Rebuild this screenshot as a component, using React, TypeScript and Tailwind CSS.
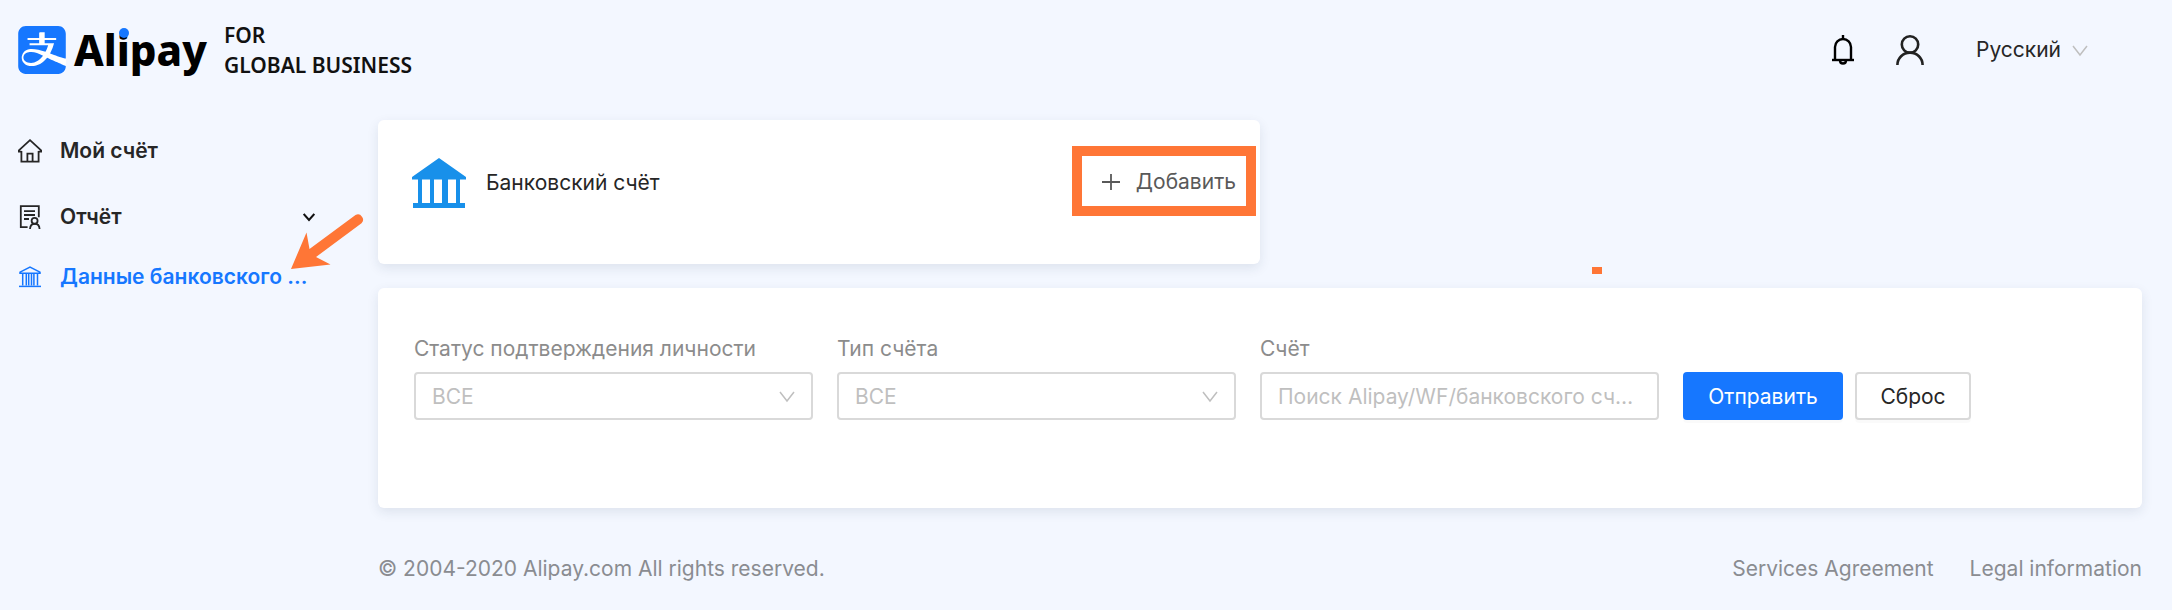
import React from "react";
import { SiAlipay } from "react-icons/si";

type IconProps = { className?: string };

function BellIcon({ className }: IconProps) {
  return (
    <svg viewBox="0 0 24 30" className={className} fill="none" stroke="#000" strokeWidth="2.400" aria-hidden="true">
      <path d="M4 25V12a8 8 0 0 1 16 0v13" />
      <path d="M1 25h22" />
      <path d="M12 0v4" />
      <path d="M9 25.5c0 4 6 4 6 0" />
    </svg>
  );
}

function UserIcon({ className }: IconProps) {
  return (
    <svg viewBox="0 0 28 30" className={className} fill="none" stroke="#222" strokeWidth="2.600" aria-hidden="true">
      <ellipse cx="14" cy="9.5" rx="8.2" ry="8.2" />
      <path d="M1.4 30a12.6 12.4 0 0 1 25.2 0" />
    </svg>
  );
}

function HomeIcon({ className }: IconProps) {
  return (
    <svg viewBox="0 0 24 24" className={className} fill="none" stroke="currentColor" strokeWidth="1.800" aria-hidden="true">
      <path d="M3.400 12.600H.900V11.400L12 1.200l11.100 10.200v1.200H20.600" />
      <path d="M3.400 12v10.600h17.200V12" />
      <path d="M9.400 22v-7.400h5.200V22" />
    </svg>
  );
}

function ReportIcon({ className }: IconProps) {
  return (
    <svg viewBox="0 0 24 24" className={className} fill="none" stroke="currentColor" strokeWidth="1.800" aria-hidden="true">
      <path d="M9.600 22.200H2.800V1.200h18v11" />
      <path d="M6 6.200h11M6 10h11M6 14h5" />
      <circle cx="16.600" cy="15.800" r="3" />
      <path d="M12 24c.4-7 9.200-7 9.600 0" />
    </svg>
  );
}

function BankOutlineIcon({ className }: IconProps) {
  return (
    <svg viewBox="0 0 24 24" className={className} fill="none" stroke="currentColor" strokeWidth="1.500" aria-hidden="true">
      <path d="M2 8.200v-1L12 2l10 5.200v1z" />
      <path d="M4.700 8.400v12M8.300 8.400v12M10.700 8.400v12M13.500 8.400v12M15.900 8.400v12M19.500 8.400v12" />
      <path d="M1 21.400h22" />
    </svg>
  );
}

function BankSolidIcon({ className }: IconProps) {
  return (
    <svg viewBox="0 0 54 50" className={className} fill="#1890ea" aria-hidden="true">
      <path d="M27 0 L54 19 V21.500 H48 V45 H53 V50 H1 V45 H6 V21.500 H0 V19 Z M10 21.500 V45 H18 V21.500 Z M22 21.500 V45 H30 V21.500 Z M36 21.500 V45 H44 V21.500 Z" fillRule="evenodd" />
    </svg>
  );
}

function Chevron({ className }: IconProps) {
  return (
    <svg viewBox="0 0 16 12" className={className} fill="none" stroke="#bfbfbf" strokeWidth="1.500" aria-hidden="true">
      <path d="M1 1l7 9 7-9" />
    </svg>
  );
}

function Logo() {
  return (
    <a href="#" className="flex items-center">
      <span className="mr-2 rounded-xl bg-white">
        <SiAlipay className="size-12 text-[#1677ff]" aria-hidden="true" />
      </span>
      <span className="relative w-[134px] font-['Noto_Sans'] text-[42px] leading-[52px] font-extrabold text-black">
        Alipay
        <span className="absolute top-1 left-[45px] size-[10px] rounded-full bg-[#1677ff]" />
      </span>
      <span className="ml-4 font-['Noto_Sans'] text-[21px] leading-[30px] font-semibold text-[#111]">
        FOR
        <br />
        GLOBAL BUSINESS
      </span>
    </a>
  );
}

function SelectField({ id, label }: { id: string; label: string }) {
  return (
    <div className="pr-6">
      <label htmlFor={id} className="block pb-[7px] text-[#8c8c8c]">
        {label}
      </label>
      <div className="relative">
        <select id={id} className="h-12 w-full appearance-none rounded border-2 border-[#d9d9d9] bg-white px-4 pt-[2px] text-[#bfbfbf]">
          <option>ВСЕ</option>
        </select>
        <Chevron className="pointer-events-none absolute top-[19px] right-[18px] h-3 w-4" />
      </div>
    </div>
  );
}

export default function App() {
  return (
    <div className="relative min-h-screen bg-[#f3f7ff] font-['Inter',sans-serif] text-[21px] leading-8 text-[#262626]">
      <header className="flex h-[100px] items-center justify-between pr-[84px] pl-[18px]">
        <Logo />
        <div className="flex items-center">
          <button type="button" aria-label="Уведомления" className="mr-[41px]">
            <BellIcon className="h-[30px] w-6" />
          </button>
          <button type="button" aria-label="Профиль" className="mr-[52px]">
            <UserIcon className="h-[30px] w-7" />
          </button>
          <div className="relative">
            <select aria-label="Язык" className="w-28 appearance-none bg-transparent">
              <option>Русский</option>
            </select>
            <Chevron className="pointer-events-none absolute top-[11px] right-0 h-3 w-4" />
          </div>
        </div>
      </header>

      <div className="flex pt-5">
        <nav className="relative w-[378px] shrink-0 pt-[11px] pl-[18px] font-semibold">
          <a href="#" className="flex h-10 items-center gap-[18px]">
            <HomeIcon className="size-6 shrink-0" />
            Мой счёт
          </a>
          <a href="#" className="mt-[26px] flex h-10 items-center gap-[18px]">
            <ReportIcon className="size-6 shrink-0" />
            Отчёт
            <svg viewBox="0 0 12 9" className="mr-[63px] ml-auto h-[9px] w-3" fill="none" stroke="#111" strokeWidth="2" aria-hidden="true">
              <path d="M.700 1l5.300 6 5.300-6" />
            </svg>
          </a>
          <a href="#" className="mt-5 flex h-10 items-center gap-[18px] text-[#1677ff]">
            <BankOutlineIcon className="size-6 shrink-0" />
            <span className="whitespace-nowrap">Данные банковского ...</span>
          </a>
          <svg viewBox="0 0 76 60" className="absolute top-[92px] left-[290px] h-[60px] w-[76px]" fill="#ff7636" aria-hidden="true">
            <path d="M1 57L16.500 20.500L19.500 37L65.500 3A5.200 5.200 0 0 1 71.500 11.300L26 45L40.500 52.500Z" />
          </svg>
        </nav>

        <main className="min-w-0 flex-1 pr-[30px]">
          <div className="flex">
            <section className="flex h-36 w-1/2 items-start justify-between rounded-md bg-white pt-[26px] pr-1 pl-[34px] shadow-[0_4px_12px_rgba(30,50,80,0.1)]">
              <div className="flex items-center gap-5 pt-3">
                <BankSolidIcon className="h-[50px] w-[54px]" />
                <h2>Банковский счёт</h2>
              </div>
              <button type="button" className="flex h-[70px] items-center gap-4 border-10 border-[#ff7636] pt-[2px] pr-[10px] pl-5 text-[#595959]">
                <svg viewBox="0 0 18 18" className="size-[18px]" stroke="currentColor" strokeWidth="1.800" aria-hidden="true">
                  <path d="M9 1v16M0 9h18" />
                </svg>
                Добавить
              </button>
            </section>
            <div className="w-1/2 self-end pl-[332px]">
              <div className="relative h-0">
                <div className="absolute top-[3px] h-[7px] w-[10px] bg-[#ff7636]" />
              </div>
            </div>
          </div>

          <section className="mt-6 h-[220px] rounded-md bg-white pt-[45px] pr-9 pl-9 shadow-[0_4px_12px_rgba(30,50,80,0.1)]">
            <form className="grid grid-cols-4 items-end" onSubmit={(e) => e.preventDefault()}>
              <SelectField id="status" label="Статус подтверждения личности" />
              <SelectField id="type" label="Тип счёта" />
              <div className="pr-6">
                <label htmlFor="account" className="block pb-[7px] text-[#8c8c8c]">
                  Счёт
                </label>
                <input
                  id="account"
                  type="text"
                  placeholder="Поиск Alipay/WF/банковского счёта"
                  className="h-12 w-full rounded border-2 border-[#d9d9d9] bg-white px-4 text-ellipsis placeholder:text-[#bfbfbf]"
                />
              </div>
              <div className="flex gap-3">
                <button type="submit" className="h-12 w-40 rounded bg-[#1677ff] pt-[2px] text-white shadow-[0_3px_0_rgba(0,0,0,0.02)]">
                  Отправить
                </button>
                <button type="reset" className="h-12 w-[116px] rounded border-2 border-[#d9d9d9] bg-white pt-[2px] shadow-[0_3px_0_rgba(0,0,0,0.02)]">
                  Сброс
                </button>
              </div>
            </form>
          </section>

          <footer className="flex justify-between pt-[45px] text-[#8a8c91]">
            <p>© 2004-2020 Alipay.com All rights reserved.</p>
            <div className="flex gap-9">
              <a href="#">Services Agreement</a>
              <a href="#">Legal information</a>
            </div>
          </footer>
        </main>
      </div>
    </div>
  );
}
